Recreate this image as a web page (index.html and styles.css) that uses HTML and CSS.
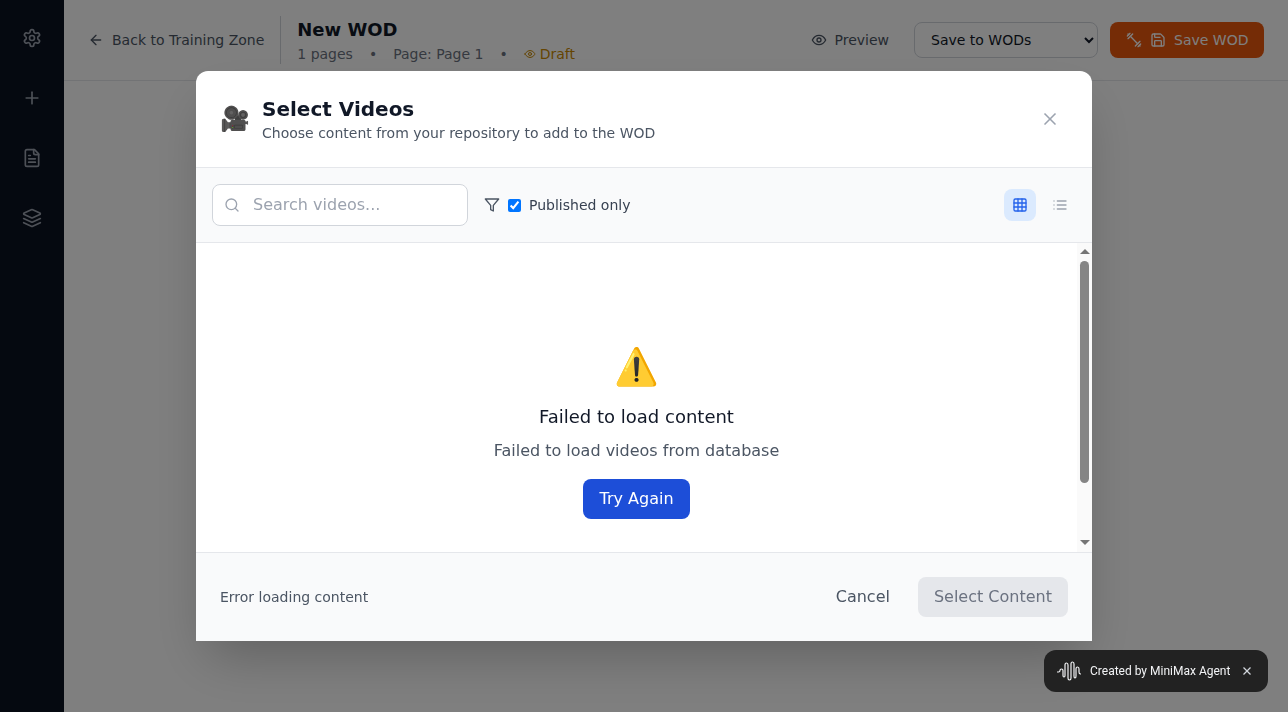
FILE: index.html
```html
<!DOCTYPE html>
<html lang="en">
<head>
    <meta charset="UTF-8">
    <meta name="viewport" content="width=device-width, initial-scale=1.0">
    <title>New WOD</title>
    <link rel="stylesheet" href="styles.css">
</head>
<body>
    <div class="app">
        <!-- Sidebar -->
        <nav class="sidebar">
            <svg class="icon side-icon" viewBox="0 0 24 24"><path d="M12.22 2h-.44a2 2 0 0 0-2 2v.18a2 2 0 0 1-1 1.73l-.43.25a2 2 0 0 1-2 0l-.15-.08a2 2 0 0 0-2.73.73l-.22.38a2 2 0 0 0 .73 2.73l.15.1a2 2 0 0 1 1 1.72v.51a2 2 0 0 1-1 1.74l-.15.09a2 2 0 0 0-.73 2.73l.22.38a2 2 0 0 0 2.73.73l.15-.08a2 2 0 0 1 2 0l.43.25a2 2 0 0 1 1 1.73V20a2 2 0 0 0 2 2h.44a2 2 0 0 0 2-2v-.18a2 2 0 0 1 1-1.73l.43-.25a2 2 0 0 1 2 0l.15.08a2 2 0 0 0 2.73-.73l.22-.39a2 2 0 0 0-.73-2.73l-.15-.08a2 2 0 0 1-1-1.74v-.5a2 2 0 0 1 1-1.74l.15-.09a2 2 0 0 0 .73-2.73l-.22-.38a2 2 0 0 0-2.73-.73l-.15.08a2 2 0 0 1-2 0l-.43-.25a2 2 0 0 1-1-1.73V4a2 2 0 0 0-2-2z"/><circle cx="12" cy="12" r="3"/></svg>
            <svg class="icon side-icon" viewBox="0 0 24 24"><path d="M5 12h14"/><path d="M12 5v14"/></svg>
            <svg class="icon side-icon" viewBox="0 0 24 24"><path d="M15 2H6a2 2 0 0 0-2 2v16a2 2 0 0 0 2 2h12a2 2 0 0 0 2-2V7Z"/><path d="M14 2v4a2 2 0 0 0 2 2h4"/><path d="M10 9H8"/><path d="M16 13H8"/><path d="M16 17H8"/></svg>
            <svg class="icon side-icon" viewBox="0 0 24 24"><path d="m12.83 2.18a2 2 0 0 0-1.66 0L2.6 6.08a1 1 0 0 0 0 1.83l8.58 3.91a2 2 0 0 0 1.66 0l8.58-3.9a1 1 0 0 0 0-1.83Z"/><path d="m22 17.65-9.17 4.16a2 2 0 0 1-1.66 0L2 17.65"/><path d="m22 12.65-9.17 4.16a2 2 0 0 1-1.66 0L2 12.65"/></svg>
        </nav>

        <div class="main">
            <!-- Top bar -->
            <header class="topbar">
                <a class="back-link">
                    <svg class="icon icon-16" viewBox="0 0 24 24"><path d="m12 19-7-7 7-7"/><path d="M19 12H5"/></svg>
                    Back to Training Zone
                </a>
                <div class="title-block">
                    <h1>New WOD</h1>
                    <p class="meta">
                        <span>1 pages</span>
                        <span>•</span>
                        <span>Page: Page 1</span>
                        <span>•</span>
                        <span class="draft">
                            <svg class="icon icon-12" viewBox="0 0 24 24"><path d="M2 12s3.6-7 10-7 10 7 10 7-3.6 7-10 7-10-7-10-7Z"/><circle cx="12" cy="12" r="3"/></svg>
                            Draft
                        </span>
                    </p>
                </div>
                <div class="top-actions">
                    <a class="preview-link">
                        <svg class="icon icon-16" viewBox="0 0 24 24"><path d="M2 12s3.6-7 10-7 10 7 10 7-3.6 7-10 7-10-7-10-7Z"/><circle cx="12" cy="12" r="3"/></svg>
                        Preview
                    </a>
                    <select class="save-target">
                        <option>Save to WODs</option>
                    </select>
                    <button class="save-btn">
                        <svg class="icon icon-16" viewBox="0 0 24 24"><path d="m6.5 6.5 11 11"/><path d="m21 21-1-1"/><path d="m3 3 1 1"/><path d="m18 22 4-4"/><path d="m2 6 4-4"/><path d="m3 10 7-7"/><path d="m14 21 7-7"/></svg>
                        <svg class="icon icon-16" viewBox="0 0 24 24"><path d="M15.2 3a2 2 0 0 1 1.4.6l3.8 3.8a2 2 0 0 1 .6 1.4V19a2 2 0 0 1-2 2H5a2 2 0 0 1-2-2V5a2 2 0 0 1 2-2z"/><path d="M17 21v-7a1 1 0 0 0-1-1H8a1 1 0 0 0-1 1v7"/><path d="M7 3v4a1 1 0 0 0 1 1h7"/></svg>
                        <span>Save WOD</span>
                    </button>
                </div>
            </header>
        </div>
    </div>

    <!-- Select videos modal -->
    <div class="overlay">
        <div class="modal">
            <div class="modal-header">
                <span class="modal-emoji">🎥</span>
                <div class="modal-title">
                    <h2>Select Videos</h2>
                    <p>Choose content from your repository to add to the WOD</p>
                </div>
                <svg class="icon close-icon" viewBox="0 0 24 24"><path d="M18 6 6 18"/><path d="m6 6 12 12"/></svg>
            </div>

            <div class="modal-toolbar">
                <div class="search-box">
                    <svg class="icon icon-16" viewBox="0 0 24 24"><circle cx="11" cy="11" r="8"/><path d="m21 21-4.3-4.3"/></svg>
                    <input type="text" placeholder="Search videos...">
                </div>
                <label class="published">
                    <svg class="icon icon-16" viewBox="0 0 24 24"><polygon points="22 3 2 3 10 12.46 10 19 14 21 14 12.46 22 3"/></svg>
                    <input type="checkbox" checked>
                    Published only
                </label>
                <div class="view-toggle">
                    <span class="view-btn active">
                        <svg class="icon icon-16" viewBox="0 0 24 24"><rect width="18" height="18" x="3" y="3" rx="2"/><path d="M3 9h18"/><path d="M3 15h18"/><path d="M9 3v18"/><path d="M15 3v18"/></svg>
                    </span>
                    <span class="view-btn">
                        <svg class="icon icon-16" viewBox="0 0 24 24"><path d="M8 6h13"/><path d="M8 12h13"/><path d="M8 18h13"/><path d="M3 6h.01"/><path d="M3 12h.01"/><path d="M3 18h.01"/></svg>
                    </span>
                </div>
            </div>

            <div class="modal-body">
                <div class="error-state">
                    <div class="error-emoji">⚠️</div>
                    <h3>Failed to load content</h3>
                    <p>Failed to load videos from database</p>
                    <button class="retry-btn">Try Again</button>
                </div>
                <!-- Scrollbar -->
                <div class="scroll-rail">
                    <span class="arrow-up"></span>
                    <span class="scroll-thumb"></span>
                    <span class="arrow-down"></span>
                </div>
            </div>

            <div class="modal-footer">
                <span class="footer-status">Error loading content</span>
                <div class="footer-actions">
                    <button class="cancel-btn">Cancel</button>
                    <button class="select-btn" disabled>Select Content</button>
                </div>
            </div>
        </div>
    </div>

    <!-- Badge -->
    <div class="agent-badge">
        <svg class="wave" viewBox="0 0 24 20"><path d="M0.5 11H1.5Q3 11 3 9.5T4.5 8 6 9.500V14.500Q6 16 7 16T8 14.500V4Q8 2 9.500 2T11 4V17Q11 19 12.500 19T14 17V3Q14 1 15.500 1T17 3V15Q17 17 18 17T19 15V8Q19 6 20.500 6T22 8V11Q22 13 23.500 13"/></svg>
        <span>Created by MiniMax Agent</span>
        <svg class="badge-close" viewBox="0 0 10 10"><path d="M1.500 1.500 8.500 8.500"/><path d="M8.500 1.500 1.500 8.500"/></svg>
    </div>
</body>
</html>
```

FILE: styles.css
```css
* { box-sizing: border-box; }

body {
    margin: 0;
    height: 712px;
    overflow: hidden;
    font-family: "DejaVu Sans", sans-serif;
    background-color: #fff;
    color: #111827;
}

h1, h2, h3, p { margin: 0; }

.icon {
    fill: none;
    stroke: currentColor;
    stroke-width: 2;
    stroke-linecap: round;
    stroke-linejoin: round;
    flex-shrink: 0;
}
.icon-16 { width: 16px; height: 16px; }
.icon-12 { width: 12px; height: 12px; }

.app { display: flex; height: 100%; }

/* Sidebar */
.sidebar {
    width: 64px;
    flex-shrink: 0;
    background-color: #0a1220;
    color: #9ca3af;
    display: flex;
    flex-direction: column;
    align-items: center;
    gap: 40px;
    padding-top: 28px;
}
.side-icon { width: 20px; height: 20px; }

/* Top bar */
.main { flex: 1; }
.topbar {
    height: 81px;
    padding: 16px 24px;
    border-bottom: 1px solid #e5e7eb;
    display: flex;
    align-items: center;
}
.back-link {
    display: flex;
    align-items: center;
    gap: 8px;
    font-size: 14px;
    color: #4b5563;
    height: 48px;
    padding-right: 16px;
    border-right: 1px solid #d1d5db;
}
.title-block { margin-left: 16px; }
h1 { font-size: 18px; font-weight: 700; line-height: 28px; }
.meta {
    display: flex;
    gap: 16px;
    font-size: 14px;
    line-height: 20px;
    color: #6b7280;
}
.draft {
    display: flex;
    align-items: center;
    gap: 4px;
    color: #ca8a04;
}
.top-actions {
    margin-left: auto;
    display: flex;
    align-items: center;
    gap: 12px;
}
.preview-link {
    display: flex;
    align-items: center;
    gap: 8px;
    padding: 0 13px 0 12px;
    font-size: 14px;
    color: #4b5563;
}
.save-target {
    width: 184px;
    height: 36px;
    padding: 0 12px;
    font-family: inherit;
    font-size: 14px;
    color: #111827;
    background-color: #fff;
    border: 1px solid #d1d5db;
    border-radius: 8px;
}
.save-btn {
    display: flex;
    align-items: center;
    gap: 8px;
    width: 154px;
    height: 36px;
    padding: 0 16px;
    border: none;
    border-radius: 8px;
    font-family: inherit;
    font-size: 14px;
    white-space: nowrap;
    color: #fff;
    background-color: #ea580c;
}

/* Modal */
.overlay {
    position: fixed;
    inset: 0;
    display: flex;
    align-items: center;
    justify-content: center;
    background-color: rgba(0, 0, 0, 0.5);
}
.modal {
    width: 896px;
    height: 570px;
    display: flex;
    flex-direction: column;
    background-color: #fff;
    border-radius: 12px 12px 0 0;
    overflow: hidden;
    box-shadow: 0 25px 50px -12px rgba(0, 0, 0, 0.25);
}
.modal-header {
    height: 97px;
    flex-shrink: 0;
    padding: 0 32px 0 24px;
    border-bottom: 1px solid #e5e7eb;
    display: flex;
    align-items: center;
}
.modal-emoji { font-size: 24px; margin-right: 12px; }
.modal-title { flex: 1; }
h2 { font-size: 20px; font-weight: 700; line-height: 28px; }
.modal-title p { font-size: 14px; line-height: 20px; color: #4b5563; }
.close-icon { width: 20px; height: 20px; color: #9ca3af; }

.modal-toolbar {
    height: 75px;
    flex-shrink: 0;
    padding: 0 16px;
    background-color: #f9fafb;
    border-bottom: 1px solid #e5e7eb;
    display: flex;
    align-items: center;
}
.search-box {
    width: 256px;
    height: 42px;
    padding: 0 12px;
    display: flex;
    align-items: center;
    gap: 13px;
    color: #9ca3af;
    background-color: #fff;
    border: 1px solid #d1d5db;
    border-radius: 8px;
}
.search-box .icon { margin-left: -1px; }
.search-box input {
    width: 100%;
    height: 24px;
    padding: 0 0 2px;
    border: none;
    outline: none;
    font-family: inherit;
    font-size: 16px;
}
.search-box input::placeholder { color: #9ca3af; }
.published {
    margin-left: 16px;
    display: flex;
    align-items: center;
    gap: 8px;
    font-size: 14px;
    color: #374151;
}
.published .icon { color: #4b5563; }
.published input { width: 13px; height: 13px; margin: 0; }
.view-toggle { margin-left: auto; display: flex; gap: 8px; }
.view-btn {
    width: 32px;
    height: 32px;
    display: flex;
    align-items: center;
    justify-content: center;
    border-radius: 8px;
    color: #9ca3af;
}
.view-btn.active { background-color: #dbeafe; color: #2563eb; }

.modal-body { flex: 1; min-height: 0; display: flex; }
.error-state {
    flex: 1;
    padding-top: 96px;
    display: flex;
    flex-direction: column;
    align-items: center;
}
.error-emoji { font-size: 36px; line-height: 56px; margin-bottom: 8px; }
h3 { font-size: 18px; font-weight: 400; line-height: 28px; color: #111827; margin-bottom: 8px; }
.error-state p { font-size: 16px; line-height: 24px; color: #4b5563; margin-bottom: 16px; }
.retry-btn {
    height: 40px;
    padding: 0 16px 2px;
    border: none;
    border-radius: 8px;
    font-family: inherit;
    font-size: 16px;
    color: #fff;
    background-color: #1d4ed8;
}

.scroll-rail {
    width: 15px;
    flex-shrink: 0;
    padding: 6px 0 7px;
    background-color: #fafafa;
    display: flex;
    flex-direction: column;
    align-items: center;
}
.arrow-up, .arrow-down {
    width: 0;
    height: 0;
    border-left: 5px solid transparent;
    border-right: 5px solid transparent;
}
.arrow-up { border-bottom: 5px solid #757575; }
.arrow-down { border-top: 5px solid #757575; margin-top: auto; }
.scroll-thumb {
    width: 9px;
    height: 222px;
    margin-top: 7px;
    border-radius: 5px;
    background-color: #858585;
}

.modal-footer {
    height: 89px;
    flex-shrink: 0;
    padding: 0 24px;
    background-color: #f9fafb;
    border-top: 1px solid #e5e7eb;
    display: flex;
    align-items: center;
    justify-content: space-between;
}
.footer-status { font-size: 14px; color: #4b5563; }
.footer-actions { display: flex; gap: 12px; }
.footer-actions button {
    height: 40px;
    padding: 0 16px 2px;
    border: none;
    border-radius: 8px;
    font-family: inherit;
    font-size: 16px;
}
.cancel-btn { color: #4b5563; background-color: transparent; }
.select-btn { color: #6b7280; background-color: #e5e7eb; }

/* Badge */
.agent-badge {
    position: fixed;
    left: 1044px;
    top: 650px;
    width: 224px;
    height: 42px;
    padding: 0 16px 0 13px;
    display: flex;
    align-items: center;
    gap: 9px;
    border-radius: 12px;
    background-color: #222;
    color: #f3f4f6;
    font-family: Roboto, sans-serif;
    font-size: 12px;
}
.wave {
    width: 24px;
    height: 20px;
    fill: none;
    stroke: #f3f4f6;
    stroke-width: 1.2;
    stroke-linecap: round;
    flex-shrink: 0;
}
.badge-close {
    width: 10px;
    height: 10px;
    margin-left: auto;
    fill: none;
    stroke: #d1d5db;
    stroke-width: 1.3;
}
```
